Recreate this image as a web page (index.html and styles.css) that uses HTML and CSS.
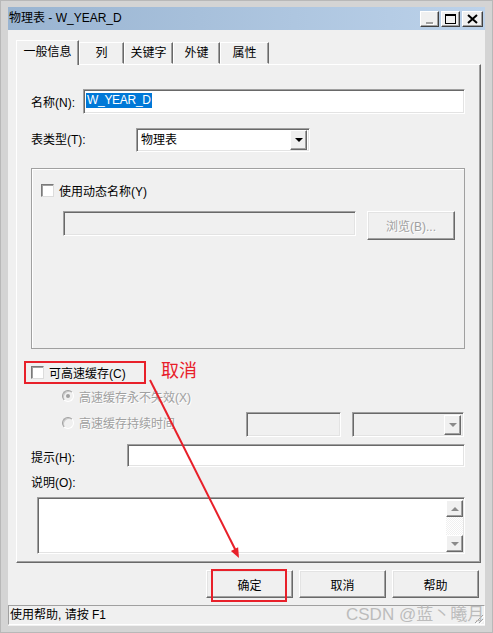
FILE: index.html
```html
<!DOCTYPE html>
<html lang="zh-CN">
<head>
    <meta charset="UTF-8">
    <meta name="viewport" content="width=device-width, initial-scale=1.0">
    <title>物理表 - W_YEAR_D</title>
    <link rel="stylesheet" href="styles.css">
</head>
<body>
  <div class="window">
    <!-- Titulek okna -->
    <div class="titlebar">
      <span class="title">物理表 - W_YEAR_D</span>
      <div class="title-buttons">
        <span class="tbtn"><i class="min-glyph"></i></span>
        <span class="tbtn"><i class="max-glyph"></i></span>
        <span class="tbtn tbtn-close">
          <svg width="11" height="10" viewBox="0 0 11 10"><path d="M1 1 L10 9 M10 1 L1 9" stroke="#000" stroke-width="2"/></svg>
        </span>
      </div>
    </div>

    <div class="client">
      <div class="tabs">
        <span class="tab active" style="width:63px">一般信息</span>
        <span class="tab" style="width:45px">列</span>
        <span class="tab" style="width:49px">关键字</span>
        <span class="tab" style="width:47px">外键</span>
        <span class="tab" style="width:49px">属性</span>
      </div>

      <div class="panel">
        <div class="row row-name">
          <span class="lbl lbl-name">名称(N):</span>
          <div class="field grow"><span class="selected">W_YEAR_D</span></div>
        </div>

        <div class="row row-type">
          <span class="lbl lbl-type">表类型(T):</span>
          <div class="field combo type-combo">
            <span class="combo-text">物理表</span>
            <span class="drop"><i class="tri-down"></i></span>
          </div>
        </div>

        <div class="group">
          <div class="check-row">
            <span class="checkbox"></span>
            <span>使用动态名称(Y)</span>
          </div>
          <div class="group-fields">
            <div class="field disabled dyn-field"></div>
            <span class="btn btn-disabled browse">浏览(B)...</span>
          </div>
        </div>

        <div class="row row-cache">
          <span class="checkbox"></span>
          <span class="cache-text">可高速缓存(C)</span>
        </div>

        <div class="row row-radio1">
          <span class="radio checked"></span>
          <span class="dis-text">高速缓存永不失效(X)</span>
        </div>

        <div class="row row-radio2">
          <div class="radio-block">
            <span class="radio"></span>
            <span class="dis-text">高速缓存持续时间</span>
          </div>
          <div class="field disabled time-field"></div>
          <div class="field disabled combo unit-combo">
            <span class="drop"><i class="tri-down tri-gray"></i></span>
          </div>
        </div>

        <div class="row row-hint">
          <span class="lbl lbl-hint">提示(H):</span>
          <div class="field grow"></div>
        </div>

        <div class="desc-label">说明(O):</div>

        <div class="field memo">
          <div class="memo-text"></div>
          <div class="scroll">
            <span class="scroll-btn"><i class="tri-up"></i></span>
            <span class="scroll-track"></span>
            <span class="scroll-btn"><i class="tri-down tri-gray"></i></span>
          </div>
        </div>
      </div>

      <div class="buttons">
        <span class="btn dlg-btn">确定</span>
        <span class="btn dlg-btn">取消</span>
        <span class="btn dlg-btn">帮助</span>
      </div>

      <div class="statusbar">
        <span>使用帮助, 请按 F1</span>
        <svg class="grip" width="12" height="12" viewBox="0 0 12 12">
          <path d="M11 3 L3 11 M11 7 L7 11 M11 11 L11 11" stroke="#a0a0a0" stroke-width="1"/>
          <path d="M12 4 L4 12 M12 8 L8 12" stroke="#fff" stroke-width="1"/>
        </svg>
      </div>
    </div>

    <!-- Anotace přes screenshot -->
    <span class="note">取消</span>
    <span class="watermark">CSDN @蓝丶曦月</span>
    <svg class="annot" width="493" height="633" viewBox="0 0 493 633">
      <rect x="24" y="361" width="120" height="21" fill="none" stroke="#e8202a" stroke-width="2"/>
      <rect x="211" y="569" width="74" height="31" fill="none" stroke="#e8202a" stroke-width="2"/>
      <path d="M149 379 L235 550" stroke="#e8202a" stroke-width="2"/>
      <path d="M238 557 L237.1 546.3 L229.9 549.9 Z" fill="#e8202a"/>
    </svg>
  </div>
</body>
</html>
```

FILE: styles.css
```css
* {
  box-sizing: border-box;
}

body {
  margin: 0;
  background: #fff;
  font-family: "Liberation Sans", "Noto Sans CJK SC", sans-serif;
  font-size: 12px;
  color: #000;
}

.window {  /* rám okna */
  position: relative;
  width: 493px;
  height: 633px;
  background: #d4d4d4;
  border: 1px solid #b8b8b8;
  padding: 6px 7px;
  display: flex;
  flex-direction: column;
}

.titlebar {
  height: 23px;
  display: flex;
  align-items: flex-start;
  background: linear-gradient(to right, #99b4d1, #bcd2ea);
}

.title {
  flex: 1;
  line-height: 23px;
  padding-left: 1px;
  white-space: nowrap;
}

.title-buttons {
  display: flex;
  gap: 2px;
  margin-top: 4px;
  padding-right: 2px;
}

.tbtn {
  width: 19px;
  height: 16px;
  background: #f0f0f0;
  border: 1px solid;
  border-color: #fff #404040 #404040 #fff;
  box-shadow: inset -1px -1px 0 #a0a0a0;
  display: flex;
  align-items: center;
  justify-content: center;
}

.tbtn-close {
  width: 21px;
}

.min-glyph {
  width: 7px;
  height: 2px;
  background: #a0a0a0;
  margin-top: 8px;
  box-shadow: 1px 1px 0 #fff;
}

.max-glyph {
  width: 11px;
  height: 10px;
  border: 1px solid #000;
  border-top-width: 2px;
}

.client {
  flex: 1;
  background: #f0f0f0;
  padding-top: 10px;
  display: flex;
  flex-direction: column;
}

.tabs {
  display: flex;
  height: 24px;
  margin-left: 8px;
  align-items: flex-end;
}

.tab {
  height: 22px;
  line-height: 20px;
  text-align: center;
  border: 1px solid;
  border-color: #fff #696969 transparent #fff;
  box-shadow: inset -1px 0 0 #a0a0a0;
  background: #f0f0f0;
}

.tab.active {
  height: 25px;
  line-height: 23px;
  margin-bottom: -1px;
  border-bottom: none;
  position: relative;
  z-index: 1;
}

.panel {
  height: 499px;
  margin: 0 4px 0 8px;
  border: 1px solid;
  border-color: #fff #696969 #696969 #fff;
  box-shadow: inset -1px -1px 0 #a0a0a0;
  padding: 24px 15px 0 14px;
  display: flex;
  flex-direction: column;
}

.row {
  display: flex;
  align-items: center;
}

.lbl {
  flex: none;
}

.lbl-name {
  width: 52px;
}

.lbl-type {
  width: 105px;
  margin-top: -3px;
}

.lbl-hint {
  width: 96px;
  align-self: flex-end;
  line-height: 18px;
}

.grow {
  flex: 1;
}

.field {  /* vtlačené pole */
  background: #fff;
  border: 1px solid;
  border-color: #a0a0a0 #fff #fff #a0a0a0;
  box-shadow: inset 1px 1px 0 #696969, inset -1px -1px 0 #e3e3e3;
}

.field.disabled {
  background: #f0f0f0;
}

.row-name {
  height: 25px;
}

.row-name .field {
  height: 25px;
  padding: 3px 0 0 2px;
}

.selected {
  display: inline-block;
  background: #0078d7;
  color: #fff;
  height: 15px;
  line-height: 15px;
  padding: 0 1px;
  letter-spacing: -0.3px;
}

.row-type {
  height: 24px;
  margin-top: 14px;
}

.combo {
  display: flex;
  align-items: center;
  justify-content: space-between;
  padding: 2px;
}

.type-combo {
  width: 174px;
  height: 24px;
}

.combo-text {
  padding-left: 2px;
  line-height: 18px;
}

.drop {
  width: 17px;
  height: 20px;
  background: #f0f0f0;
  border: 1px solid;
  border-color: #fff #696969 #696969 #fff;
  box-shadow: inset -1px -1px 0 #a0a0a0;
  display: flex;
  align-items: center;
  justify-content: center;
}

.tri-down {
  width: 0;
  height: 0;
  border-left: 4px solid transparent;
  border-right: 4px solid transparent;
  border-top: 4px solid #000;
}

.tri-gray {
  border-top-color: #8a8a8a;
}

.tri-up {
  width: 0;
  height: 0;
  border-left: 4px solid transparent;
  border-right: 4px solid transparent;
  border-bottom: 4px solid #8a8a8a;
}

.group {
  height: 181px;
  margin-top: 16px;
  border: 1px solid #a0a0a0;
  box-shadow: inset 1px 1px 0 #fff;
  padding: 13px 0 0 9px;
}

.check-row {
  display: flex;
  align-items: center;
  gap: 5px;
  height: 17px;
}

.checkbox {
  flex: none;
  width: 13px;
  height: 13px;
  background: #fff;
  border: 1px solid;
  border-color: #7a7a7a #dcdcdc #dcdcdc #7a7a7a;
  box-shadow: inset 1px 1px 0 #a0a0a0;
}

.group-fields {
  display: flex;
  align-items: flex-start;
  margin: 12px 0 0 22px;
  gap: 11px;
}

.dyn-field {
  width: 293px;
  height: 25px;
}

.btn {  /* vystouplé tlačítko */
  display: flex;
  align-items: center;
  justify-content: center;
  background: #f0f0f0;
  border: 1px solid;
  border-color: #fff #696969 #696969 #fff;
  box-shadow: inset -1px -1px 0 #a0a0a0, inset 1px 1px 0 #e3e3e3;
}

.btn-disabled {
  color: #a0a0a0;
  text-shadow: 1px 1px 0 #fff;
}

.browse {
  width: 88px;
  height: 29px;
}

.row-cache {
  height: 20px;
  margin-top: 13px;
  gap: 5px;
}

.radio {
  flex: none;
  width: 12px;
  height: 12px;
  border-radius: 50%;
  background: #f0f0f0;
  border: 1px solid;
  border-color: #a0a0a0 #fff #fff #a0a0a0;
  box-shadow: inset 1px 1px 0 #c8c8c8;
  display: flex;
  align-items: center;
  justify-content: center;
}

.radio.checked::after {
  content: "";
  width: 4px;
  height: 4px;
  border-radius: 50%;
  background: #a0a0a0;
}

.dis-text {
  color: #a0a0a0;
  text-shadow: 1px 1px 0 #fff;
}

.row-radio1 {
  height: 20px;
  margin-top: 4px;
  padding-left: 31px;
  gap: 5px;
}

.row-radio2 {
  height: 25px;
  margin-top: 6px;
}

.radio-block {
  width: 215px;
  display: flex;
  align-items: center;
  gap: 5px;
  padding-left: 31px;
  margin-top: -4px;
}

.time-field {
  width: 95px;
  height: 25px;
}

.unit-combo {
  width: 112px;
  height: 25px;
  margin-left: 11px;
  justify-content: flex-end;
}

.row-hint {
  height: 23px;
  margin-top: 7px;
}

.row-hint .field {
  height: 23px;
}

.desc-label {
  height: 16px;
  line-height: 16px;
  margin-top: 8px;
}

.memo {
  height: 57px;
  margin: 6px 0 0 6px;
  display: flex;
  padding: 2px 1px 1px 2px;
}

.memo-text {
  flex: 1;
}

.scroll {
  width: 17px;
  display: flex;
  flex-direction: column;
}

.scroll-btn {
  height: 17px;
  background: #f0f0f0;
  border: 1px solid;
  border-color: #fff #696969 #696969 #fff;
  box-shadow: inset -1px -1px 0 #a0a0a0;
  display: flex;
  align-items: center;
  justify-content: center;
}

.scroll-track {
  flex: 1;
  background: repeating-conic-gradient(#f0f0f0 0 25%, #fff 0 50%) 0 0 / 2px 2px;
}

.buttons {
  display: flex;
  justify-content: flex-end;
  gap: 6px;
  height: 28px;
  margin-top: 7px;
  padding-right: 6px;
}

.dlg-btn {
  width: 87px;
  height: 28px;
}

.statusbar {
  position: relative;
  height: 20px;
  margin-top: 7px;
  border: 1px solid;
  border-color: #a0a0a0 #fff #fff #a0a0a0;
  line-height: 18px;
  padding-left: 1px;
}

.grip {
  position: absolute;
  right: 0;
  bottom: 0;
}

.note {  /* červený popisek */
  position: absolute;
  left: 160px;
  top: 356px;
  font-family: "Noto Sans CJK SC", sans-serif;
  font-size: 18px;
  line-height: 24px;
  color: #e8202a;
}

.watermark {
  position: absolute;
  left: 345px;
  top: 603px;
  font-size: 17px;
  line-height: 22px;
  color: #bcbcbc;
  white-space: nowrap;
}

.annot {
  position: absolute;
  left: 0;
  top: 0;
  pointer-events: none;
}
```
